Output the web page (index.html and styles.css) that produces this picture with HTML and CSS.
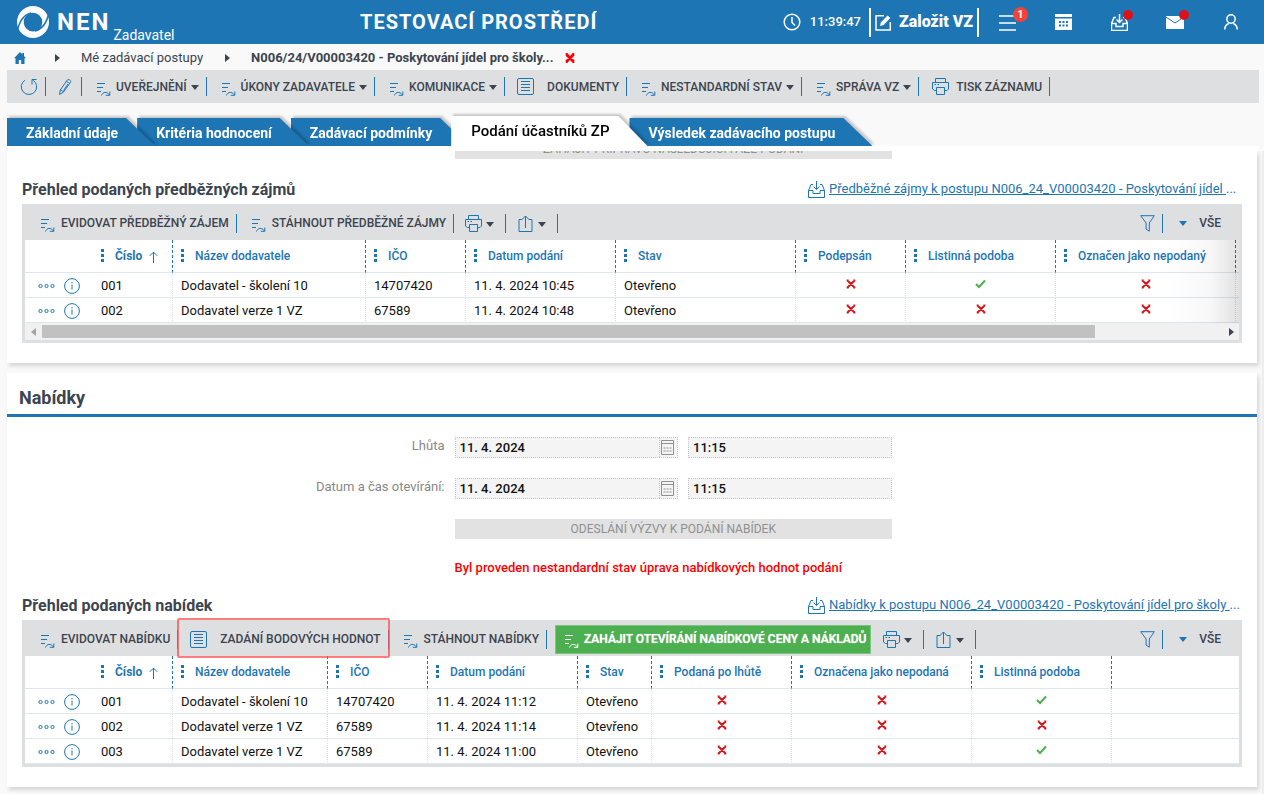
FILE: index.html
```html
<!DOCTYPE html>
<html lang="cs">
<head>
<meta charset="UTF-8">
<title>NEN - Zadavatel</title>
<link rel="stylesheet" href="styles.css">
</head>
<body>

<!-- ikony -->
<svg class="sprite" aria-hidden="true">
	<symbol id="i-list" viewBox="0 0 14 14"><path d="M0 1.500h8M0 5.500h6M0 9.500h4M4.500 13.500c1-3.500 5.500-4.500 8-.5M12.800 9.500v3.800h-4"/></symbol>
	<symbol id="i-refresh" viewBox="0 0 18 18"><path d="M5 2.200A7.700 7.700 0 1 0 13 2.200M16.500 1.500h-4.500v5"/></symbol>
	<symbol id="i-pencil" viewBox="0 0 14 18"><path d="M1.500 16.500l.8-4.500 7-10c1-1.400 4.200.4 3.200 2.300l-7 9.700zM3 12l2.500 2M8.700 3.500l3 2M10 6l-4.500 6.500"/></symbol>
	<symbol id="i-doc" viewBox="0 0 17 17"><rect x=".5" y=".5" width="16" height="16" rx="1.500"/><path d="M4 3.500h9M4 6.500h9M4 9.500h9M4 12.500h9"/></symbol>
	<symbol id="i-print" viewBox="0 0 17 17"><path d="M3.500 4.500v-4h10v4M4.500 12.500h-2l-2-1.500v-6.500h16v6.500l-1.500 1.500h-2.500M4.500 9.500h8v7h-8zM2.500 6.500h1.500M5.500 6.500h1.500"/></symbol>
	<symbol id="i-export" viewBox="0 0 14 17"><path d="M4 4.500h-3.500v12h13v-12h-3.500M7 13V1M4 4l3-3 3 3"/></symbol>
	<symbol id="i-filter" viewBox="0 0 15 17"><path d="M.7.7h13.600l-5 7.300v8.200l-3.200-2V8z"/></symbol>
	<symbol id="i-inbox" viewBox="0 0 17 17"><path d="M5 3.500h-2L.5 9.500v7h16v-7l-2.500-6h-2M.5 9.500h4.500v3h7v-3h4.500M8.500 0v8M5.500 5.500l3 3 3-3"/></symbol>
	<symbol id="i-info" viewBox="0 0 16 16"><circle cx="8" cy="8" r="7.400"/><path d="M8 6.500v5M8 4v1.300"/></symbol>
	<symbol id="i-more" viewBox="0 0 17 6"><circle cx="2.500" cy="3" r="1.600"/><circle cx="8.500" cy="3" r="1.600"/><circle cx="14.500" cy="3" r="1.600"/></symbol>
	<symbol id="i-up" viewBox="0 0 9 12"><path d="M4.500 12V1.200M.8 4.800l3.700-3.700 3.700 3.700"/></symbol>
	<symbol id="i-cross" viewBox="0 0 10 10"><path d="M1.500 1.500l7 7M8.500 1.500l-7 7M.7 1.500h2M7.300 1.500h2M.7 8.500h2M7.300 8.500h2"/></symbol>
	<symbol id="i-check" viewBox="0 0 11 10"><path d="M1 5l3 3 6-6.500"/></symbol>
	<symbol id="i-clock" viewBox="0 0 18 18"><circle cx="9" cy="9" r="7.800"/><path d="M9 4v5.500l3 3"/></symbol>
	<symbol id="i-edit" viewBox="0 0 17 17"><path d="M9 1.700H1v14.300h14.300V8"/><path class="solid" d="M5 12l.8-3.500L12.500 1.500l2.800 2.600-6.700 7z"/></symbol>
	<symbol id="i-menu" viewBox="0 0 17 17"><path d="M0 2h17M0 9h17M0 16h17"/></symbol>
	<symbol id="i-cal" viewBox="0 0 17 17"><path class="solid" fill-rule="evenodd" d="M0 0h17v3H0zM0 4.500h17V16H0zM4 7v2h2V7zM7.500 7v2h2V7zM11 7v2h2V7zM4 10.500v2h2v-2zM7.500 10.500v2h2v-2zM11 10.500v2h2v-2z"/></symbol>
	<symbol id="i-date" viewBox="0 0 15 17"><path d="M1.500 1.500h12v14h-12zM1.500 4.500h12M3.500 9h2M6.500 9h2M9.500 9h2M3.500 12h2M6.500 12h2M9.500 12h2"/></symbol>
	<symbol id="i-mail" viewBox="0 0 18 13"><path class="solid" d="M0 0h18v13H0z"/><path class="fold" d="M0 1l9 6 9-6"/></symbol>
	<symbol id="i-user" viewBox="0 0 14 16"><circle cx="7" cy="5" r="4.200"/><path d="M.8 15.500c0-3.500 2-5.300 4-6M13.200 15.500c0-3.500-2-5.300-4-6"/></symbol>
	<symbol id="i-home" viewBox="0 0 12 12"><path class="solid" d="M6 0l2.300 2.200V1H10v3l2 2.200h-1.500V12H7.200V8H4.800v4H1.500V6.200H0z"/></symbol>
</svg>

<header class="header">
	<a class="logo" href="#">
		<svg class="logo_mark" viewBox="0 0 34 34"><path fill="#fff" fill-rule="evenodd" d="M17 1a16 16 0 1 1 0 32a16 16 0 1 1 0-32zM17 7.800a9.300 9.300 0 1 0 0 18.600a9.300 9.300 0 1 0 0-18.600z"/><path fill="none" stroke="#1d75b4" stroke-width="1.500" d="M1 27C3 17 7 10 15 8M33 7.500C31 17 27 24 19 26"/></svg>
		<span class="logo_name">NEN</span>
		<span class="logo_role">Zadavatel</span>
	</a>
	<div class="env">TESTOVACÍ PROSTŘEDÍ</div>
	<div class="clock"><svg class="icon clock_icon"><use href="#i-clock"/></svg><span>11:39:47</span></div>
	<button class="create"><svg class="icon icon_17 bold"><use href="#i-edit"/></svg>Založit VZ</button>
	<nav class="header_nav">
		<button aria-label="Menu"><svg class="icon icon_17 bold"><use href="#i-menu"/></svg><span class="badge">1</span></button>
		<button aria-label="Kalendář"><svg class="icon icon_17"><use href="#i-cal"/></svg></button>
		<button aria-label="Doručené"><svg class="icon icon_17 bold"><use href="#i-inbox"/></svg><span class="dot"></span></button>
		<button aria-label="Zprávy"><svg class="icon icon_mail"><use href="#i-mail"/></svg><span class="dot"></span></button>
		<button aria-label="Uživatel"><svg class="icon icon_user bold"><use href="#i-user"/></svg></button>
	</nav>
</header>

<nav class="crumbs">
	<a class="home" href="#" aria-label="Domů"><svg class="icon"><use href="#i-home"/></svg></a>
	<i class="arrow"></i>
	<a href="#">Mé zadávací postupy</a>
	<i class="arrow"></i>
	<b>N006/24/V00003420 - Poskytování jídel pro školy...</b>
	<button class="close" aria-label="Zavřít"><svg class="icon"><use href="#i-cross"/></svg></button>
</nav>

<div class="toolbar main_bar">
	<button class="tool only_icon" aria-label="Obnovit"><svg class="icon icon_18"><use href="#i-refresh"/></svg></button>
	<button class="tool pencil" aria-label="Upravit"><svg class="icon icon_pencil"><use href="#i-pencil"/></svg></button>
	<button class="tool"><svg class="icon icon_list"><use href="#i-list"/></svg>UVEŘEJNĚNÍ<i class="caret"></i></button>
	<button class="tool"><svg class="icon icon_list"><use href="#i-list"/></svg>ÚKONY ZADAVATELE<i class="caret"></i></button>
	<button class="tool"><svg class="icon icon_list"><use href="#i-list"/></svg>KOMUNIKACE<i class="caret"></i></button>
	<button class="tool doc"><svg class="icon icon_17"><use href="#i-doc"/></svg>DOKUMENTY</button>
	<button class="tool"><svg class="icon icon_list"><use href="#i-list"/></svg>NESTANDARDNÍ STAV<i class="caret"></i></button>
	<button class="tool"><svg class="icon icon_list"><use href="#i-list"/></svg>SPRÁVA VZ<i class="caret"></i></button>
	<button class="tool print"><svg class="icon icon_17"><use href="#i-print"/></svg>TISK ZÁZNAMU</button>
</div>

<nav class="tabs">
	<div class="tab"><button>Základní údaje</button></div>
	<div class="tab"><button>Kritéria hodnocení</button></div>
	<div class="tab"><button>Zadávací podmínky</button></div>
	<div class="tab active"><button>Podání účastníků ZP</button></div>
	<div class="tab"><button>Výsledek zadávacího postupu</button></div>
</nav>
<div class="tab_base"></div>

<main class="content">

	<section class="panel interests">
		<div class="scrolled"><button class="wide_btn" disabled>ZAHÁJIT PŘÍPRAVU NÁSLEDUJÍCÍ FÁZE PODÁNÍ</button></div>
		<div class="grid_head">
			<h3>Přehled podaných předběžných zájmů</h3>
			<a class="export" href="#"><svg class="icon icon_17"><use href="#i-inbox"/></svg><u>Předběžné zájmy k postupu N006_24_V00003420 - Poskytování jídel&nbsp;</u>...</a>
		</div>
		<div class="grid">
			<div class="toolbar grid_bar">
				<button class="tool"><svg class="icon icon_list"><use href="#i-list"/></svg>EVIDOVAT PŘEDBĚŽNÝ ZÁJEM</button>
				<button class="tool"><svg class="icon icon_list"><use href="#i-list"/></svg>STÁHNOUT PŘEDBĚŽNÉ ZÁJMY</button>
				<button class="tool small" aria-label="Tisk"><svg class="icon icon_17"><use href="#i-print"/></svg><i class="caret"></i></button>
				<button class="tool small" aria-label="Export"><svg class="icon icon_17"><use href="#i-export"/></svg><i class="caret"></i></button>
				<button class="tool filter" aria-label="Filtr"><svg class="icon icon_filter"><use href="#i-filter"/></svg></button>
				<button class="all"><i class="caret"></i>VŠE</button>
			</div>
			<div class="fade">
				<table>
					<colgroup><col class="w67"><col class="w80"><col class="w193"><col class="w100"><col class="w150"><col class="w180"><col class="w110"><col class="w150"><col class="w180"><col></colgroup>
					<thead>
						<tr>
							<th></th>
							<th class="sorted"><i class="dots"></i>Číslo<svg class="icon icon_up"><use href="#i-up"/></svg></th>
							<th><i class="dots"></i>Název dodavatele</th>
							<th><i class="dots"></i>IČO</th>
							<th><i class="dots"></i>Datum podání</th>
							<th><i class="dots"></i>Stav</th>
							<th><i class="dots"></i>Podepsán</th>
							<th><i class="dots"></i>Listinná podoba</th>
							<th><i class="dots"></i>Označen jako nepodaný</th>
							<th class="rest"></th>
						</tr>
					</thead>
					<tbody>
						<tr>
							<td class="acts"><svg class="icon icon_more"><use href="#i-more"/></svg><svg class="icon icon_info"><use href="#i-info"/></svg></td>
							<td>001</td><td>Dodavatel - školení 10</td><td>14707420</td><td>11. 4. 2024 10:45</td><td>Otevřeno</td>
							<td class="flag"><svg class="icon cross"><use href="#i-cross"/></svg></td>
							<td class="flag"><svg class="icon check"><use href="#i-check"/></svg></td>
							<td class="flag"><svg class="icon cross"><use href="#i-cross"/></svg></td>
							<td class="rest"></td>
						</tr>
						<tr>
							<td class="acts"><svg class="icon icon_more"><use href="#i-more"/></svg><svg class="icon icon_info"><use href="#i-info"/></svg></td>
							<td>002</td><td>Dodavatel verze 1 VZ</td><td>67589</td><td>11. 4. 2024 10:48</td><td>Otevřeno</td>
							<td class="flag"><svg class="icon cross"><use href="#i-cross"/></svg></td>
							<td class="flag"><svg class="icon cross"><use href="#i-cross"/></svg></td>
							<td class="flag"><svg class="icon cross"><use href="#i-cross"/></svg></td>
							<td class="rest"></td>
						</tr>
					</tbody>
				</table>
			</div>
			<div class="scrollbar"><i class="arrow left"></i><div class="track"><div class="thumb"></div></div><i class="arrow"></i></div>
		</div>
	</section>

	<section class="panel">
		<h2>Nabídky</h2>
		<form class="form">
			<label for="deadline">Lhůta</label>
			<div class="fields">
				<div class="date"><input type="text" id="deadline" value="11. 4. 2024" readonly><button type="button" aria-label="Vybrat datum" disabled><svg class="icon icon_date"><use href="#i-date"/></svg></button></div>
				<input class="time" type="text" value="11:15" aria-label="Lhůta - čas" readonly>
			</div>
			<label for="opening">Datum a čas otevírání:</label>
			<div class="fields">
				<div class="date"><input type="text" id="opening" value="11. 4. 2024" readonly><button type="button" aria-label="Vybrat datum" disabled><svg class="icon icon_date"><use href="#i-date"/></svg></button></div>
				<input class="time" type="text" value="11:15" aria-label="Otevírání - čas" readonly>
			</div>
			<button type="button" class="wide_btn" disabled>ODESLÁNÍ VÝZVY K PODÁNÍ NABÍDEK</button>
			<p class="warning">Byl proveden nestandardní stav úprava nabídkových hodnot podání</p>
		</form>
		<div class="grid_head">
			<h3>Přehled podaných nabídek</h3>
			<a class="export" href="#"><svg class="icon icon_17"><use href="#i-inbox"/></svg><u>Nabídky k postupu N006_24_V00003420 - Poskytování jídel pro školy&nbsp;</u>...</a>
		</div>
		<div class="grid">
			<div class="toolbar grid_bar">
				<button class="tool"><svg class="icon icon_list"><use href="#i-list"/></svg>EVIDOVAT NABÍDKU</button>
				<button class="tool doc marked"><svg class="icon icon_17"><use href="#i-doc"/></svg>ZADÁNÍ BODOVÝCH HODNOT</button>
				<button class="tool"><svg class="icon icon_list"><use href="#i-list"/></svg>STÁHNOUT NABÍDKY</button>
				<button class="green"><svg class="icon icon_list"><use href="#i-list"/></svg>ZAHÁJIT OTEVÍRÁNÍ NABÍDKOVÉ CENY A NÁKLADŮ</button>
				<button class="tool small" aria-label="Tisk"><svg class="icon icon_17"><use href="#i-print"/></svg><i class="caret"></i></button>
				<button class="tool small" aria-label="Export"><svg class="icon icon_17"><use href="#i-export"/></svg><i class="caret"></i></button>
				<button class="tool filter" aria-label="Filtr"><svg class="icon icon_filter"><use href="#i-filter"/></svg></button>
				<button class="all"><i class="caret"></i>VŠE</button>
			</div>
			<table>
				<colgroup><col class="w67"><col class="w80"><col class="w155"><col class="w100"><col class="w150"><col class="w74"><col class="w140"><col class="w180"><col class="w140"><col></colgroup>
				<thead>
					<tr>
						<th></th>
						<th class="sorted"><i class="dots"></i>Číslo<svg class="icon icon_up"><use href="#i-up"/></svg></th>
						<th><i class="dots"></i>Název dodavatele</th>
						<th><i class="dots"></i>IČO</th>
						<th><i class="dots"></i>Datum podání</th>
						<th><i class="dots"></i>Stav</th>
						<th><i class="dots"></i>Podaná po lhůtě</th>
						<th><i class="dots"></i>Označena jako nepodaná</th>
						<th><i class="dots"></i>Listinná podoba</th>
						<th class="rest"></th>
					</tr>
				</thead>
				<tbody>
					<tr>
						<td class="acts"><svg class="icon icon_more"><use href="#i-more"/></svg><svg class="icon icon_info"><use href="#i-info"/></svg></td>
						<td>001</td><td>Dodavatel - školení 10</td><td>14707420</td><td>11. 4. 2024 11:12</td><td>Otevřeno</td>
						<td class="flag"><svg class="icon cross"><use href="#i-cross"/></svg></td>
						<td class="flag"><svg class="icon cross"><use href="#i-cross"/></svg></td>
						<td class="flag"><svg class="icon check"><use href="#i-check"/></svg></td>
						<td class="rest"></td>
					</tr>
					<tr>
						<td class="acts"><svg class="icon icon_more"><use href="#i-more"/></svg><svg class="icon icon_info"><use href="#i-info"/></svg></td>
						<td>002</td><td>Dodavatel verze 1 VZ</td><td>67589</td><td>11. 4. 2024 11:14</td><td>Otevřeno</td>
						<td class="flag"><svg class="icon cross"><use href="#i-cross"/></svg></td>
						<td class="flag"><svg class="icon cross"><use href="#i-cross"/></svg></td>
						<td class="flag"><svg class="icon cross"><use href="#i-cross"/></svg></td>
						<td class="rest"></td>
					</tr>
					<tr>
						<td class="acts"><svg class="icon icon_more"><use href="#i-more"/></svg><svg class="icon icon_info"><use href="#i-info"/></svg></td>
						<td>003</td><td>Dodavatel verze 1 VZ</td><td>67589</td><td>11. 4. 2024 11:00</td><td>Otevřeno</td>
						<td class="flag"><svg class="icon cross"><use href="#i-cross"/></svg></td>
						<td class="flag"><svg class="icon cross"><use href="#i-cross"/></svg></td>
						<td class="flag"><svg class="icon check"><use href="#i-check"/></svg></td>
						<td class="rest"></td>
					</tr>
				</tbody>
			</table>
		</div>
	</section>

</main>
</body>
</html>
```
FILE: styles.css
```css
* {
	box-sizing: border-box;
}
body {
	margin: 0;
	background-color: #f9f9f9;
	color: #3c454f;
	font: 13px/16px Roboto, "Liberation Sans", sans-serif;
}
button {
	margin: 0;
	padding: 0;
	border: 0;
	background: none;
	color: inherit;
	font: inherit;
}
a {
	color: inherit;
	text-decoration: none;
}
.sprite {
	display: none;
}

/* ikony */
.icon {
	flex: none;
	fill: none;
	stroke: currentColor;
	stroke-width: 1px;
	color: #1d75b4;
}
.solid {
	fill: currentColor;
	stroke: none;
}
.fold {
	stroke: #1d75b4;
}
.bold { stroke-width: 1.5px; }
.icon_17 { width: 17px; height: 17px; }
.icon_18 { width: 18px; height: 18px; }
.icon_list { width: 14px; height: 14px; }
.icon_pencil { width: 14px; height: 18px; }
.icon_filter { width: 15px; height: 17px; }
.icon_mail { width: 18px; height: 13px; }
.icon_user { width: 14px; height: 16px; }
.icon_date { width: 15px; height: 17px; }
.icon_more { width: 17px; height: 6px; }
.icon_info { width: 16px; height: 16px; }
.icon_up { width: 9px; height: 12px; }
.caret {
	border: 4px solid transparent;
	border-top: 5px solid #3c454f;
	border-bottom: 0;
}
.arrow {
	border: 4px solid transparent;
	border-left: 5px solid #3c454f;
	border-right: 0;
}

/* hlavicka */
.header {
	display: flex;
	align-items: center;
	height: 44px;
	padding: 0 5px 0 16px;
	background-color: #1d75b4;
	color: #fff;
}
.header .icon {
	color: #fff;
}
.logo {
	display: flex;
	align-items: center;
}
.logo_mark {
	width: 34px;
	height: 34px;
	margin-right: 7px;
}
.logo_name {
	font-size: 24px;
	font-weight: 700;
	letter-spacing: 2px;
}
.logo_role {
	align-self: flex-end;
	margin: 0 0 -2px 3px;
	font-size: 14px;
	line-height: 12px;
}
.env {
	flex: 1;
	text-align: center;
	font-size: 20px;
	font-weight: 700;
	letter-spacing: 1px;
}
.clock {
	display: flex;
	align-items: center;
	gap: 9px;
	margin-right: 8px;
	font-weight: 500;
}
.clock_icon {
	width: 18px;
	height: 18px;
	stroke-width: 1.5px;
}
.create {
	display: flex;
	align-items: center;
	gap: 7px;
	height: 29px;
	padding: 0 4px;
	border: solid #fff;
	border-width: 0 2px;
	font-size: 16px;
	font-weight: 900;
}
.header_nav {
	display: flex;
}
.header_nav button {
	position: relative;
	display: flex;
	align-items: center;
	justify-content: center;
	width: 56px;
	height: 44px;
}
.badge {
	position: absolute;
	top: 7px;
	right: 7px;
	width: 15px;
	height: 15px;
	border-radius: 50%;
	background-color: #f44336;
	font-size: 11px;
	font-weight: 700;
	line-height: 15px;
}
.dot {
	position: absolute;
	top: 10px;
	right: 14px;
	width: 10px;
	height: 10px;
	border-radius: 50%;
	background-color: #dd1218;
}

/* drobeckova navigace */
.crumbs {
	display: flex;
	align-items: center;
	height: 26px;
	padding: 2px 0 0 14px;
}
.crumbs .icon {
	display: block;
	width: 12px;
	height: 12px;
}
.crumbs .home {
	margin-right: 7px;
}
.crumbs .arrow {
	margin: 0 21px 0 22px;
}
.crumbs b {
	font-weight: 700;
}
.crumbs .close {
	margin-left: 12px;
}
.crumbs .close .icon {
	width: 10px;
	height: 10px;
	color: #fb0007;
	stroke-width: 3px;
}

/* listy s tlacitky */
.toolbar {
	display: flex;
	align-items: center;
	background-color: #dedfe1;
	font-size: 12px;
	font-weight: 500;
}
.main_bar {
	height: 33px;
	margin: 0 5px 13px 7px;
}
.tool {
	position: relative;
	display: flex;
	align-items: center;
	height: 19px;
	padding: 0 7px 0 15px;
	border-right: 1px solid #1d75b4;
	white-space: nowrap;
}
.tool .icon_list {
	margin: 4px 5px 0 0;
}
.grid_bar .icon_list {
	margin-right: 6px;
}
.tool .caret {
	margin: 2px 0 0 4px;
}
.only_icon {
	padding: 0 7px 0 13px;
}
.pencil {
	padding: 0 9px 0 12px;
}
.doc {
	padding-left: 12px;
}
.doc .icon {
	margin-right: 13px;
}
.print {
	padding-left: 13px;
}
.print .icon {
	margin-right: 7px;
}
.small {
	padding: 0 11px;
}
.grid_bar {
	height: 36px;
	padding: 2px 21px 0 4px;
}
.filter {
	margin-left: auto;
}
.all {
	display: flex;
	align-items: center;
	gap: 12px;
	padding-left: 16px;
}
.all .caret {
	border-top-color: #1d75b4;
}
.marked::after {
	content: "";
	position: absolute;
	inset: -12px -2px -9px -1px;
	border: 2px solid rgba(255, 80, 80, .75);
	border-radius: 2px;
}
.green {
	display: flex;
	align-items: center;
	height: 29px;
	margin: 0 1px 0 8px;
	padding: 0 4px 0 9px;
	border: 1px solid #7cc47f;
	background-color: #4caf50;
	color: #fff;
	text-shadow: 0 0 1px #fff;
	white-space: nowrap;
}
.green .icon {
	margin: 4px 5px 0 0;
	color: #fff;
}

/* zalozky */
.tabs {
	display: flex;
	align-items: flex-end;
	height: 30px;
	padding-left: 7px;
}
.tab {
	position: relative;
	z-index: 1;
	margin-right: -18px;
	filter: drop-shadow(2px -2px 1px rgba(0, 0, 0, .2));
}
.tab:nth-child(1) { z-index: 3; }
.tab:nth-child(2) { z-index: 2; }
.tab button {
	display: block;
	height: 28px;
	padding: 2px 37px 0 19px;
	background-color: #1d75b4;
	clip-path: polygon(0 0, calc(100% - 29px) 0, 100% 100%, 0 100%);
	color: #fff;
	font-size: 14px;
	font-weight: 700;
	white-space: nowrap;
}
.tab.active {
	z-index: 4;
}
.active button {
	height: 30px;
	padding: 0 38px 0 20px;
	background-color: #fff;
	color: #000;
	font-size: 15px;
	font-weight: 500;
}
.tab_base {
	height: 5px;
	margin: 0 5px 0 7px;
	background-color: #fff;
}

/* obsah */
.content {
	padding: 0 5px 7px 7px;
	border-right: 2px solid #eee;
}
.panel {
	padding-bottom: 20px;
	background-color: #fff;
	box-shadow: 2px 3px 4px rgba(0, 0, 0, .14);
}
.interests {
	margin-bottom: 10px;
}
.scrolled {
	display: flex;
	align-items: flex-end;
	height: 8px;
	margin-bottom: 22px;
	padding-left: calc(35% + 10px);
	padding-right: calc(30% - 10px);
	overflow: hidden;
}
.wide_btn {
	flex: none;
	width: 100%;
	height: 20px;
	background-color: #e2e2e2;
	color: #909090;
	font-size: 12px;
}
h2 {
	margin: 0;
	padding: 13px 12px 4px;
	border-bottom: 3px solid #1d75b4;
	font-size: 18px;
	line-height: 24px;
}
h3 {
	margin: 0;
	font-size: 16px;
}
.grid_head {
	display: flex;
	justify-content: space-between;
	align-items: center;
	height: 17px;
	margin: 0 15px 6px;
}
.export {
	display: flex;
	width: 434px;
	color: #1d75b4;
	white-space: nowrap;
}
.export .icon {
	margin-right: 4px;
}
.form {
	display: grid;
	grid-template-columns: 35% 35%;
	column-gap: 10px;
	row-gap: 20px;
	margin: 20px 0 21px;
}
.form label {
	padding-top: 1px;
	text-align: right;
	color: #888;
}
.fields {
	display: flex;
	gap: 10px;
	height: 21px;
}
.date, .time {
	border: 1px dotted #c4c4c4;
	background-color: #f4f4f4;
}
.date {
	display: flex;
	flex: 1;
}
.time {
	width: 204px;
}
.fields input {
	padding: 0 4px;
	color: #111;
	font: 500 13px/16px Roboto, "Liberation Sans", sans-serif;
}
.date input {
	flex: 1;
	min-width: 0;
	border: 0;
	background: none;
}
.date button {
	display: flex;
	align-items: center;
	width: 18px;
	border-left: 1px dotted #c4c4c4;
}
.date .icon {
	color: #909090;
}
.form .wide_btn, .warning {
	grid-column: 2;
}
.warning {
	margin: 0;
	padding-top: 1px;
	color: #f00;
	font-weight: 500;
	white-space: nowrap;
}

/* tabulky */
.grid {
	margin: 0 15px;
	border: solid #dedfe1;
	border-width: 0 3px 3px;
}
.grid .toolbar {
	margin: 0 -3px;
}
.fade {
	position: relative;
}
.fade::after {
	content: "";
	position: absolute;
	inset: 0 0 0 auto;
	width: 70px;
	background: linear-gradient(to right, rgba(0, 0, 0, 0), rgba(0, 0, 0, .03) 60%, rgba(0, 0, 0, .12));
}
table {
	width: 100%;
	border-spacing: 0;
	table-layout: fixed;
	background-color: #fff;
}
.w67 { width: 67px; }
.w74 { width: 74px; }
.w80 { width: 80px; }
.w100 { width: 100px; }
.w110 { width: 110px; }
.w140 { width: 140px; }
.w150 { width: 150px; }
.w155 { width: 155px; }
.w180 { width: 180px; }
.w193 { width: 193px; }
th, td {
	padding: 0 0 0 8px;
	border-bottom: 1px solid #dfe7ee;
	text-align: left;
	white-space: nowrap;
}
th {
	height: 33px;
	border-left: 1px dashed #1d75b4;
	color: #1d75b4;
	font-size: 12px;
	font-weight: 500;
}
td {
	height: 25px;
	padding-top: 1px;
	border-left: 1px dotted #dcdfe2;
	color: #111;
}
th:nth-child(-n+2), td:nth-child(-n+2) {
	padding-left: 9px;
	border-left: 0;
}
th.rest, td.rest {
	padding: 0;
}
td.flag {
	padding: 0;
	text-align: center;
}
th.sorted {
	font-weight: 700;
}
.icon_up {
	margin-left: 7px;
	vertical-align: -3px;
}
.dots {
	display: inline-block;
	width: 3px;
	height: 15px;
	margin-right: 11px;
	background: radial-gradient(circle, #1d75b4 1.5px, transparent 2px) 0 0 / 3px 5px;
	vertical-align: -3px;
}
td.acts:nth-child(1) {
	padding-left: 13px;
}
.acts .icon {
	vertical-align: middle;
}
.acts .icon_info {
	margin-left: 9px;
}
.cross, .check {
	width: 10px;
	height: 10px;
	color: #dd1218;
	stroke-width: 2px;
}
.check {
	width: 11px;
	color: #4caf50;
}
.scrollbar {
	display: flex;
	align-items: center;
	height: 17px;
	padding: 0 5px 0 6px;
	background-color: #f1f1f1;
}
.track {
	flex: 1;
	margin: 0 4px 0 6px;
}
.thumb {
	width: 89%;
	height: 13px;
	background-color: #c1c1c1;
}
.arrow.left {
	border-left: 0;
	border-right: 5px solid #a3a3a3;
}
```
